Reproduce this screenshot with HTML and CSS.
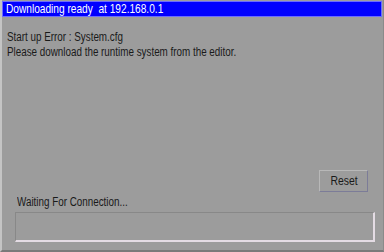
FILE: index.html
```html
<!DOCTYPE html>
<html>
<head>
<meta charset="utf-8">
<link rel="stylesheet" href="styles.css">
</head>
<body>
<div class="window">
  <div class="titlebar"><span class="narrow title-text">Downloading ready&nbsp; at 192.168.0.1</span></div>
  <div class="content">
    <div class="messages">
      <div class="line"><span class="narrow">Start up Error : System.cfg</span></div>
      <div class="line"><span class="narrow">Please download the runtime system from the editor.</span></div>
    </div>
    <div class="spacer"></div>
    <div class="button-row">
      <div class="button"><span class="narrow btn-text">Reset</span></div>
    </div>
    <div class="status"><span class="narrow">Waiting For Connection...</span></div>
    <div class="progress"></div>
  </div>
</div>
</body>
</html>
```

FILE: styles.css
```css
html, body {
  margin: 0;
  padding: 0;
  background: #9c9c9c;
}
.window {
  width: 384px;
  height: 252px;
  box-sizing: border-box;
  border-left: 2px solid #c4c4c4;
  border-bottom: 2px solid #7a7a7a;
  border-right: 1px solid #8a8a8a;
  padding-top: 1px;
  display: flex;
  flex-direction: column;
  font-family: "Liberation Sans", Arial, sans-serif;
  font-size: 12px;
  color: #1a1a1a;
}
.narrow {
  display: inline-block;
  white-space: nowrap;
  transform: scaleX(0.82);
  transform-origin: left center;
}
.titlebar {
  height: 16px;
  box-sizing: border-box;
  background: #0000ff;
  border: 1px solid #6c6cff;
  margin-right: 1px;
  color: #ffffff;
  font-size: 13px;
  line-height: 14px;
  padding-left: 3px;
}
.title-text {
  transform: scaleX(0.78);
}
.content {
  flex: 1;
  display: flex;
  flex-direction: column;
  padding: 13px 8px 8px 5px;
}
.line {
  line-height: 15px;
  font-size: 12px;
}
.spacer {
  flex: 1;
}
.button-row {
  display: flex;
  justify-content: flex-end;
  padding-right: 7px;
}
.button {
  width: 49px;
  height: 22px;
  box-sizing: border-box;
  border: 1px solid;
  border-color: #b8b8b8 #7c7c98 #7c7c98 #b8b8b8;
  text-align: center;
  line-height: 20px;
  font-size: 13px;
}
.btn-text {
  transform: scaleX(0.8);
  transform-origin: center center;
}
.status {
  margin-top: 3px;
  padding-left: 10px;
  line-height: 14px;
}
.progress {
  margin: 3px 0 0 8px;
  height: 30px;
  box-sizing: border-box;
  border: 2px solid;
  border-width: 1px 2px 2px 1px;
  border-color: #888888 #e4dce4 #e4dce4 #888888;
}
```
